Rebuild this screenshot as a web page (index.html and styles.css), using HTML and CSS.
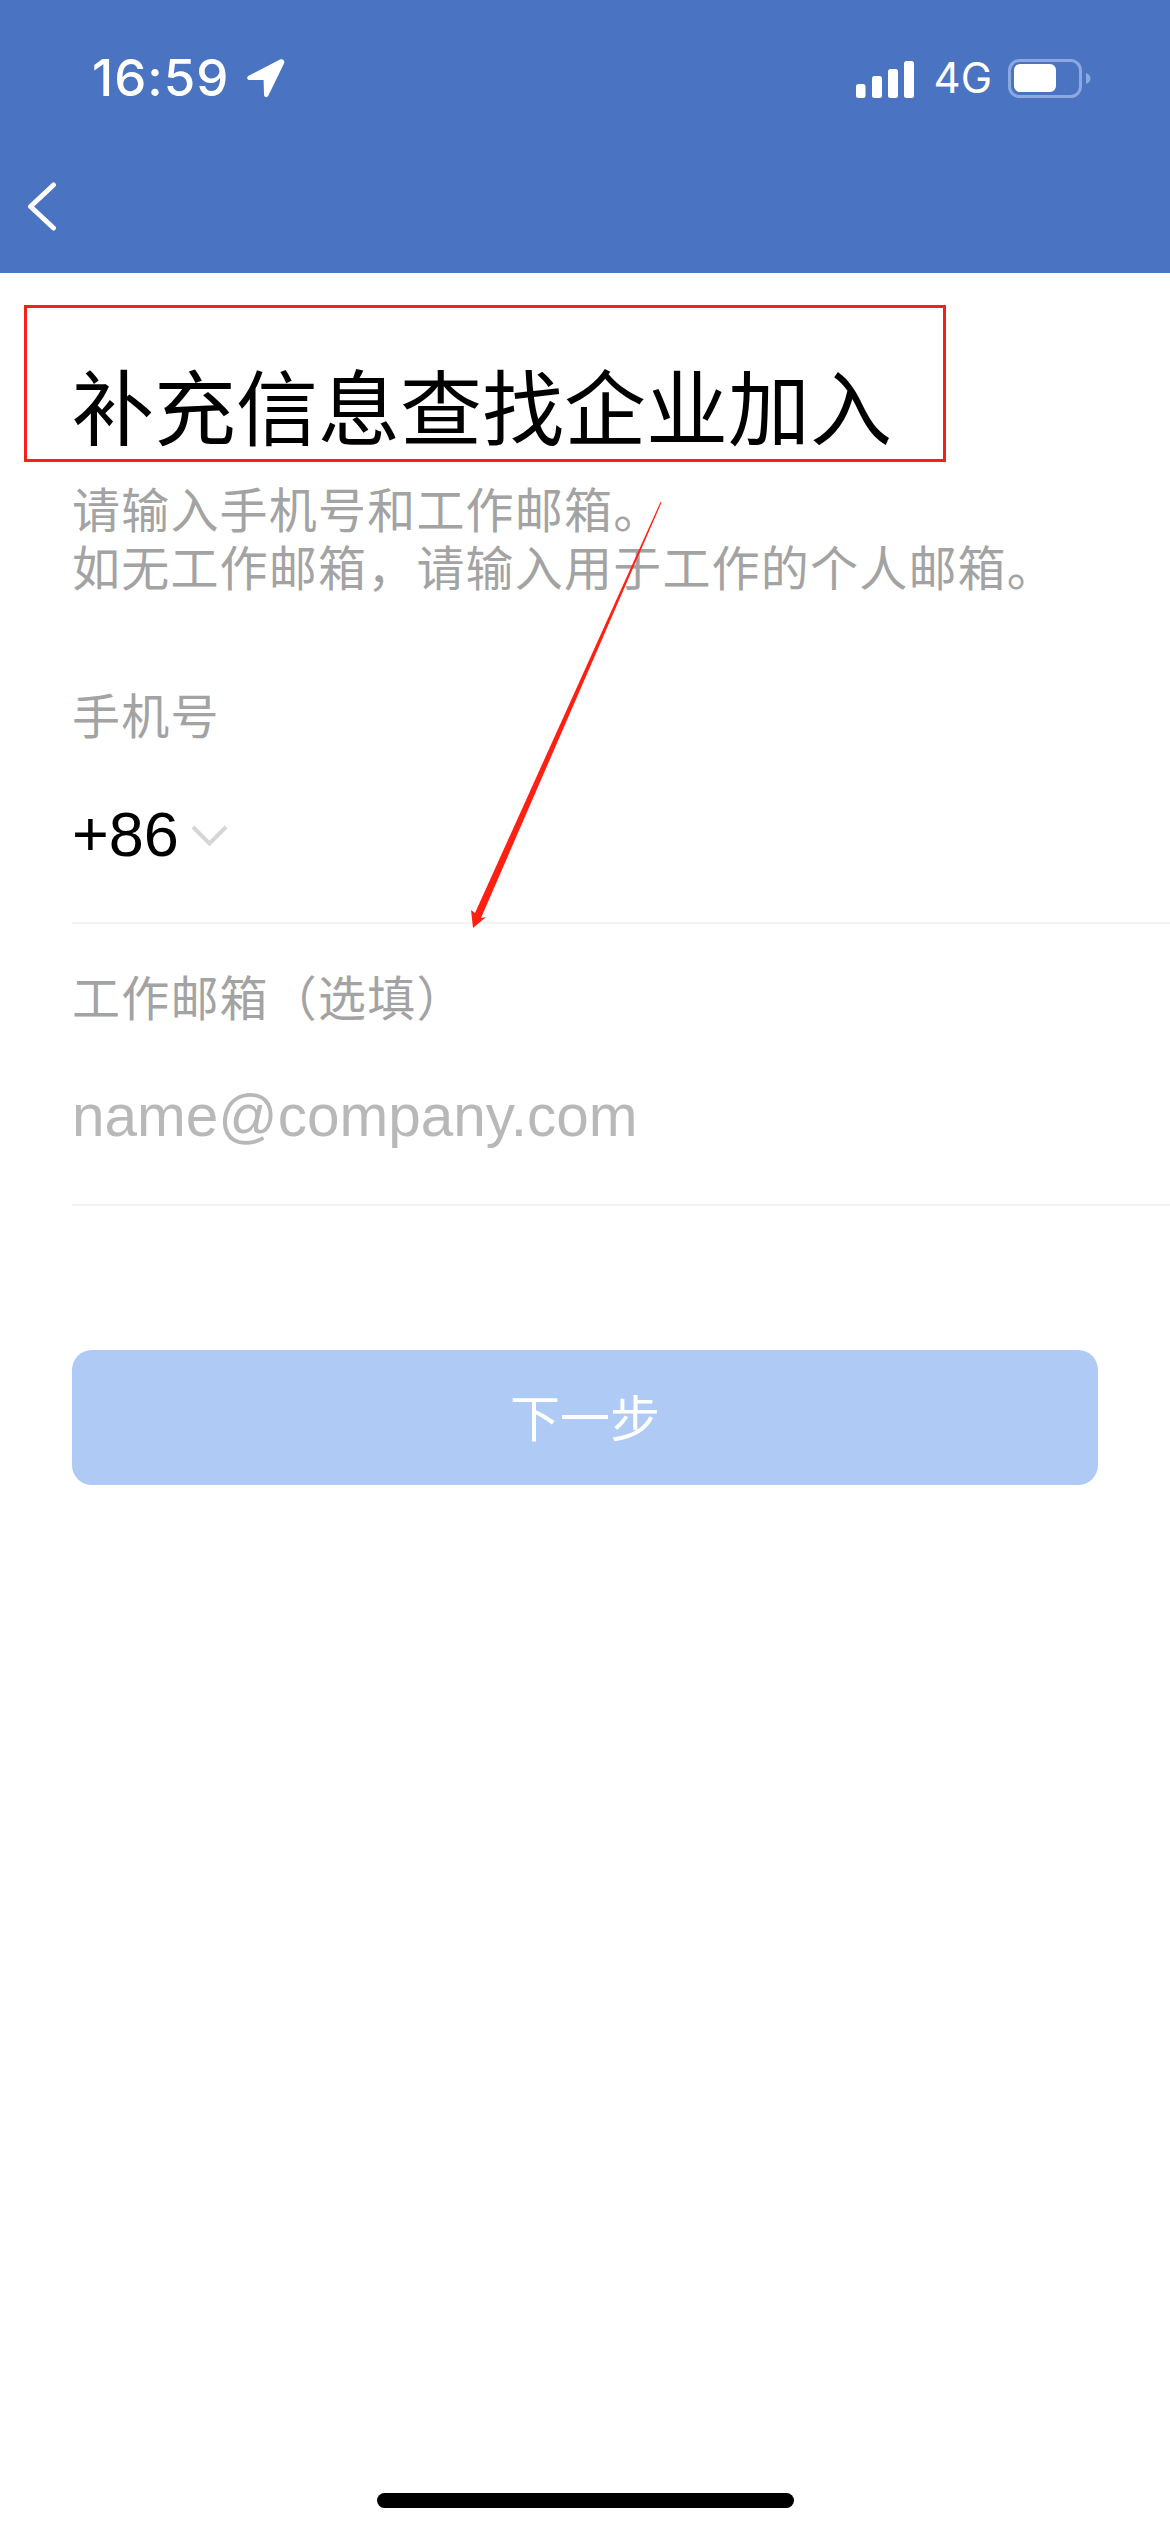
FILE: index.html
```html
<!doctype html>
<html lang="zh">
  <head>
    <meta charset="utf-8">
    <link rel="stylesheet" href="styles.css">
  </head>
  <body>
    <div class="screen">
      <div class="top-bar">
        <div class="status">
          <div class="status-left">
            <span class="time">16:59</span>
            <svg class="loc-icon" width="39" height="40" viewBox="0 0 39 40">
              <path d="M34 1.500 3 17.500c-3 1.600-2 4.600 1 4.600h13.600l.4 14.400c.1 3 3.200 3.600 4.400 1L38 5.500c1.300-3-1.400-5.300-4-4z" fill="#fff"/>
            </svg>
          </div>
          <div class="status-right">
            <svg class="signal-icon" width="58" height="37" viewBox="0 0 58 37">
              <rect x="0" y="23" width="9.500" height="14" rx="2.500" fill="#fff"/>
              <rect x="16" y="15" width="10" height="22" rx="2.500" fill="#fff"/>
              <rect x="32" y="8" width="10" height="29" rx="2.500" fill="#fff"/>
              <rect x="48" y="0" width="10" height="37" rx="2.500" fill="#fff"/>
            </svg>
            <span class="net">4G</span>
            <svg class="battery-icon" width="83" height="39" viewBox="0 0 83 39">
              <rect x="1.500" y="1.500" width="71" height="36" rx="10" fill="none" stroke="#8ba8e0" stroke-width="3"/>
              <rect x="6" y="5" width="42" height="28" rx="6" fill="#fff"/>
              <path d="M78 14c3 1 4.500 3 4.500 5.500S81 24 78 25z" fill="#8ba8e0"/>
            </svg>
          </div>
        </div>
        <div class="nav">
          <svg width="30" height="49" viewBox="0 0 30 49">
            <path d="M26.500 3 3.500 24.500l23 21.500" fill="none" stroke="#fff" stroke-width="5" stroke-linecap="round" stroke-linejoin="round"/>
          </svg>
        </div>
      </div>

      <div class="content">
        <h1 class="title">补充信息查找企业加入</h1>
        <p class="intro">请输入手机号和工作邮箱。<br>如无工作邮箱，请输入用于工作的个人邮箱。</p>

        <div class="label">手机号</div>
        <div class="field">
          <span class="code">+86</span>
          <svg class="chevron" width="37" height="21" viewBox="0 0 37 21">
            <path d="M2 2l16.500 16.500L35 2" fill="none" stroke="#d6d6d6" stroke-width="4"/>
          </svg>
        </div>

        <div class="label label-email">工作邮箱（选填）</div>
        <div class="field">
          <span class="placeholder">name@company.com</span>
        </div>

        <button class="next-btn">下一步</button>
      </div>

      <div class="home-bar"></div>

      <!-- red annotation drawn over the screenshot -->
      <div class="note-box"></div>
      <svg class="note-arrow" width="1170" height="2532" viewBox="0 0 1170 2532">
        <path d="M660.500 502 661.500 502.500 481 918 486 917 473 928 471 910 475 913z" fill="#ff2012"/>
      </svg>
    </div>
  </body>
</html>
```

FILE: styles.css
```css
* {
  box-sizing: border-box;
}

html,
body {
  margin: 0;
  padding: 0;
}

body {
  background-color: #fff;
  font-family: "Liberation Sans", "Noto Sans CJK SC", sans-serif;
}

.screen {
  position: relative;
  width: 1170px;
  height: 2532px;
  display: flex;
  flex-direction: column;
  overflow: hidden;
}

.top-bar {
  height: 273px;
  padding-top: 58px;
  background-color: #4a73c1;
  color: #fff;
}

.status {
  display: flex;
  justify-content: space-between;
  align-items: center;
  height: 40px;
  padding: 0 79px 0 92px;
}

.status-left,
.status-right {
  display: flex;
  align-items: center;
}

.time {
  font-family: Inter, "Liberation Sans", sans-serif;
  font-size: 51px;
  font-weight: 500;
  line-height: 40px;
  letter-spacing: 1px;
}

.loc-icon {
  margin-left: 17px;
}

.signal-icon {
  margin-top: 2px;
}

.net {
  font-family: Inter, "Liberation Sans", sans-serif;
  font-size: 42px;
  line-height: 40px;
  margin-left: 20px;
}

.battery-icon {
  margin-left: 16px;
}

.nav {
  padding: 84px 0 0 27px;
}

.nav svg {
  display: block;
}

.content {
  padding-left: 72px;
}

.title {
  margin: 81px 0 0;
  font-family: "Noto Sans CJK SC", sans-serif;
  font-size: 82px;
  font-weight: 400;
  line-height: 100px;
  color: #000;
}

.intro {
  margin: 24px 0 0;
  font-family: "Noto Sans CJK SC", sans-serif;
  font-size: 48px;
  line-height: 58px;
  letter-spacing: 1.200px;
  color: #a3a3a3;
}

.label {
  margin-top: 92px;
  margin-bottom: 6px;
  font-family: "Noto Sans CJK SC", sans-serif;
  font-size: 48px;
  line-height: 54px;
  letter-spacing: 1.200px;
  color: #a3a3a3;
}

.label-email {
  margin-top: 44px;
}

.field {
  display: flex;
  align-items: center;
  height: 178px;
  padding: 50px 0 50px;
  border-bottom: 2px solid #f3f3f3;
}

.code {
  font-size: 63px;
  line-height: 76px;
  color: #000;
}

.chevron {
  margin-left: 12px;
  margin-top: 2px;
}

.placeholder {
  font-size: 58.500px;
  line-height: 76px;
  color: #b8b8b8;
}

.next-btn {
  display: block;
  width: 1026px;
  height: 135px;
  margin-top: 144px;
  padding: 0 0 6px;
  border: none;
  border-radius: 20px;
  background-color: #aecaf5;
  color: #fff;
  font-family: "Noto Sans CJK SC", sans-serif;
  font-size: 50px;
}

.home-bar {
  width: 417px;
  height: 15px;
  margin: auto auto 24px;
  border-radius: 8px;
  background-color: #000;
}

.note-box {
  position: absolute;
  left: 24px;
  top: 305px;
  width: 922px;
  height: 157px;
  border: 3px solid #f5201a;
}

.note-arrow {
  position: absolute;
  left: 0;
  top: 0;
  pointer-events: none;
}
```
